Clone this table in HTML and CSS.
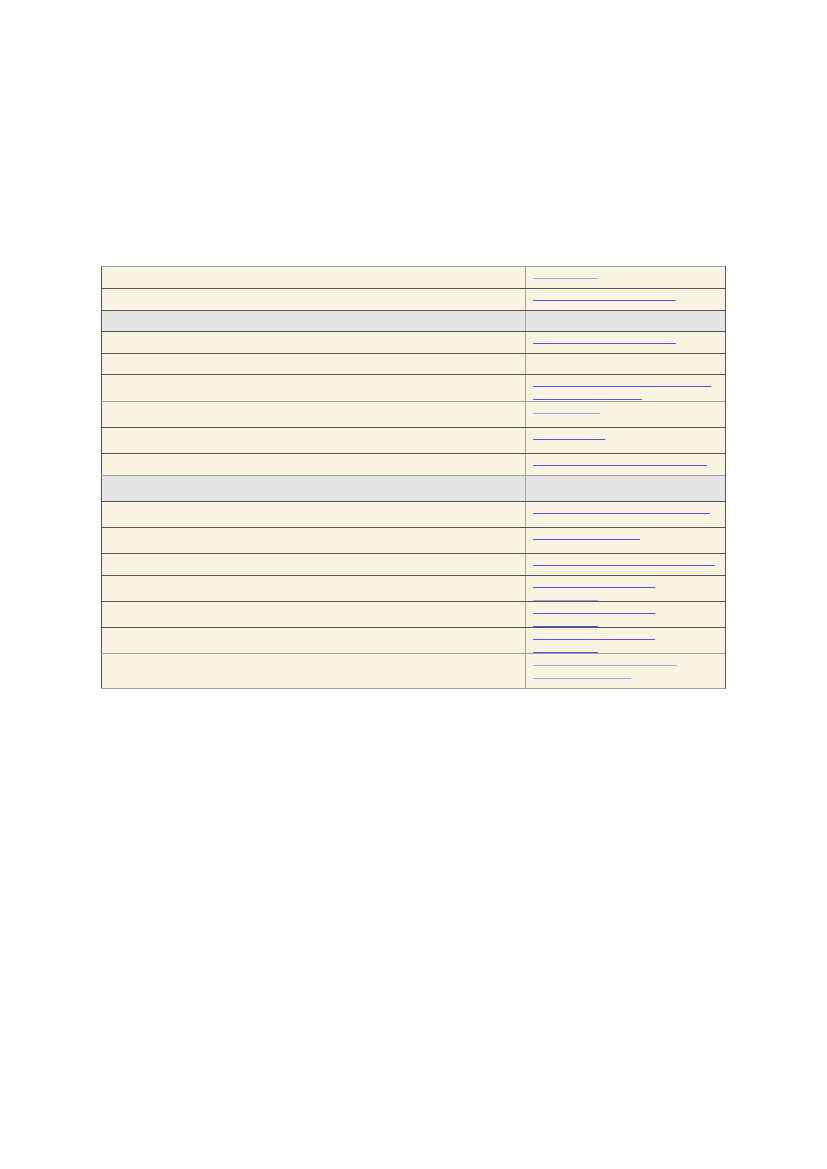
FILE: index.html
```html
<!DOCTYPE html>
<html>
<head>
<meta charset="utf-8">
<link rel="stylesheet" href="styles.css">
</head>
<body>
<div class="page">
  <div class="tbl">
    <div class="row lt h22"><div class="c1"></div><div class="c2"><div class="ln"><a href="#" class="lk soft w65"></a></div></div></div>
    <div class="row dk h22"><div class="c1"></div><div class="c2"><div class="ln"><a href="#" class="lk w143"></a></div></div></div>
    <div class="row dk h21 gray"><div class="c1"></div><div class="c2"></div></div>
    <div class="row dk h22"><div class="c1"></div><div class="c2"><div class="ln"><a href="#" class="lk w143"></a></div></div></div>
    <div class="row dk h21"><div class="c1"></div><div class="c2"></div></div>
    <div class="row dk h27"><div class="c1"></div><div class="c2"><div class="ln"><a href="#" class="lk w178"></a></div><div class="ln"><a href="#" class="lk w109"></a></div></div></div>
    <div class="row lt h26"><div class="c1"></div><div class="c2"><div class="ln"><a href="#" class="lk soft w67"></a></div></div></div>
    <div class="row dk h26"><div class="c1"></div><div class="c2"><div class="ln"><a href="#" class="lk w72"></a></div></div></div>
    <div class="row dk h22"><div class="c1"></div><div class="c2"><div class="ln"><a href="#" class="lk w174"></a></div></div></div>
    <div class="row lt h26 gray"><div class="c1"></div><div class="c2"></div></div>
    <div class="row dk h26"><div class="c1"></div><div class="c2"><div class="ln"><a href="#" class="lk w177"></a></div></div></div>
    <div class="row dk h26"><div class="c1"></div><div class="c2"><div class="ln"><a href="#" class="lk w107"></a></div></div></div>
    <div class="row dk h22"><div class="c1"></div><div class="c2"><div class="ln"><a href="#" class="lk w182"></a></div></div></div>
    <div class="row dk h26"><div class="c1"></div><div class="c2"><div class="ln"><a href="#" class="lk w122"></a></div><div class="ln"><a href="#" class="lk soft w65"></a></div></div></div>
    <div class="row dk h26"><div class="c1"></div><div class="c2"><div class="ln"><a href="#" class="lk w122"></a></div><div class="ln"><a href="#" class="lk w65"></a></div></div></div>
    <div class="row dk h26"><div class="c1"></div><div class="c2"><div class="ln"><a href="#" class="lk w122"></a></div><div class="ln"><a href="#" class="lk w65"></a></div></div></div>
    <div class="row lt h35"><div class="c1"></div><div class="c2"><div class="ln"><a href="#" class="lk soft w144"></a></div><div class="ln"><a href="#" class="lk soft w98"></a></div></div></div>
  </div>
</div>
</body>
</html>
```

FILE: styles.css
```css
html, body {
  margin: 0;
  padding: 0;
  background: #ffffff;
  font-family: "Liberation Sans", Arial, sans-serif;
  font-size: 11px;
}

.page {
  padding: 266px 0 0 101px;
}

.tbl {
  width: 625px;
  box-sizing: border-box;
  border-right: 1px solid #555555;
  border-bottom: 1px solid #a0a0a0;
  background: #f9f3e2;
}

.row {
  display: flex;
  box-sizing: border-box;
  border-top: 1px solid #555555;
}

.row.lt { border-top-color: #a0a0a0; }
.row.dk { border-top-color: #555555; }
.row.gray { background: #e5e5e5; }

.h21 { height: 21px; }
.h22 { height: 22px; }
.h26 { height: 26px; }
.h27 { height: 27px; }
.h35 { height: 35px; }

.c1 {
  width: 424px;
  box-sizing: border-box;
  border-left: 1px solid #555555;
}

.c2 {
  width: 200px;
  box-sizing: border-box;
  border-left: 1px solid #a0a0a0;
  padding-left: 7px;
}

.ln {
  height: 13px;
}

.lk {
  display: inline-block;
  vertical-align: top;
  box-sizing: border-box;
  height: 12px;
  border-bottom: 1px solid #5252e6;
  color: transparent;
  text-decoration: none;
}

.lk.soft { border-bottom-color: #a29ff0; }

.w65 { width: 65px; }
.w67 { width: 67px; }
.w72 { width: 72px; }
.w98 { width: 98px; }
.w107 { width: 107px; }
.w109 { width: 109px; }
.w122 { width: 122px; }
.w143 { width: 143px; }
.w144 { width: 144px; }
.w174 { width: 174px; }
.w177 { width: 177px; }
.w178 { width: 178px; }
.w182 { width: 182px; }
```
